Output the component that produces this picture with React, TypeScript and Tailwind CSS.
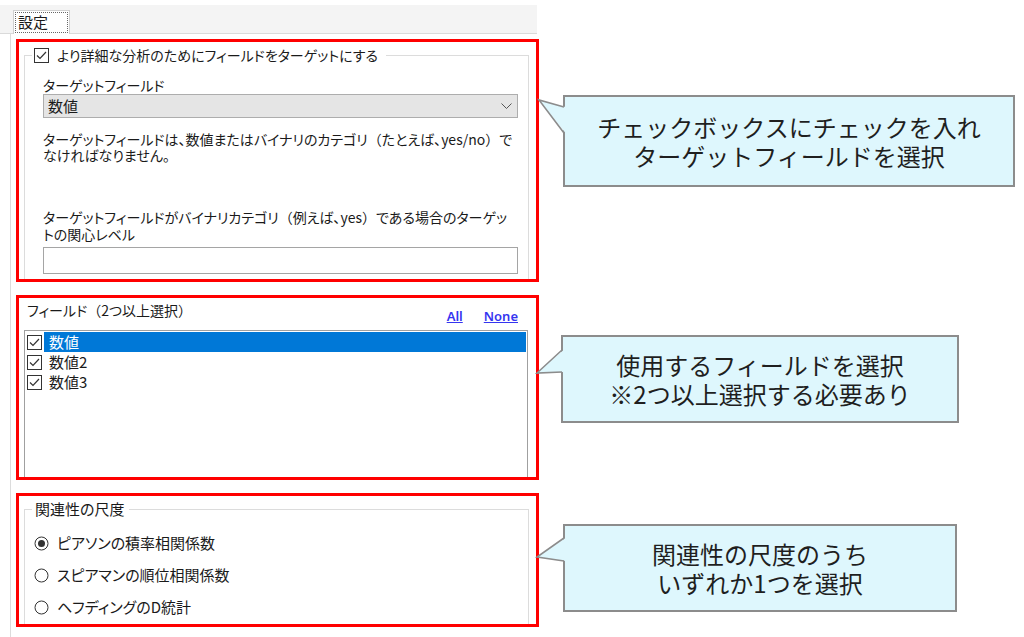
import React from 'react';

const CheckBox = ({ checked = true }: { checked?: boolean }) => (
  <svg width="15" height="15" viewBox="0 0 15 15" className="shrink-0">
    <rect x="0.5" y="0.5" width="14" height="14" fill="#fff" stroke="#333" />
    {checked && <polyline points="3,7.5 6,10.5 12,4" fill="none" stroke="#333" strokeWidth="1.2" />}
  </svg>
);

const Radio = ({ checked = false }: { checked?: boolean }) => (
  <svg width="15" height="15" viewBox="0 0 15 15" className="shrink-0">
    <circle cx="7.5" cy="7.5" r="6.5" fill="#fff" stroke="#333" />
    {checked && <circle cx="7.5" cy="7.5" r="3.5" fill="#333" />}
  </svg>
);

// full-width bracket (keeps its em width even under palt)
const P = ({ c }: { c: string }) => <span className="[font-feature-settings:normal]">{c}</span>;

type TailProps = { tip: [number, number]; y1: number; y2: number };

const Callout = ({
  className,
  tail,
  lines,
}: {
  className: string;
  tail: TailProps;
  lines: string[];
}) => {
  const [tx, ty] = tail.tip;
  // svg origin sits 30px left of the box's outer edge
  const fill = `32.5,${tail.y1} ${30 + tx},${ty} 32.5,${tail.y2}`;
  const edge = `31,${tail.y1} ${30 + tx},${ty} 31,${tail.y2}`;
  return (
    <div
      className={`relative flex shrink-0 flex-col items-center justify-center border-2 border-[#8c8c8c] bg-[#def7fd] text-center text-[24px] leading-[29px] text-[#1f1f1f] [font-feature-settings:normal] ${className}`}
    >
      <svg className="absolute left-[-32px] top-[-2px] overflow-visible" width="34" height="60">
        <polygon points={fill} fill="#def7fd" />
        <polyline points={edge} fill="none" stroke="#8c8c8c" strokeWidth="1.6" />
      </svg>
      {lines.map((l) => (
        <div key={l} className="whitespace-nowrap">
          {l}
        </div>
      ))}
    </div>
  );
};

const fields = ['数値', '数値2', '数値3'];

const measures = ['ピアソンの積率相関係数', 'スピアマンの順位相関係数', 'ヘフディングのD統計'];

export default function App() {
  return (
    <div className="flex h-[637px] w-[1024px] overflow-hidden bg-white font-['Noto_Sans_CJK_JP','Noto_Sans',sans-serif] text-[#1a1a1a] [font-feature-settings:'palt']">
      {/* dialog */}
      <div className="flex w-[539px] shrink-0 flex-col pt-[5px]">
        <div className="flex h-[29px] w-[537px] items-end border-b border-[#dadada] bg-[#f4f4f4] pl-[13px]">
          <div className="-mb-px h-[24px] w-[57px] border border-b-0 border-[#d0d0d0] bg-white p-px">
            <div className="h-[21px] border border-dotted border-[#666] pl-[2px] text-[15px] leading-[18px]">設定</div>
          </div>
        </div>

        <div className="ml-[10px] flex flex-1 flex-col border-l border-[#dcdcdc] pl-[5px]">
          {/* target */}
          <div className="mt-[5px] flex h-[243px] w-[523px] flex-col border-[3px] border-[#ff0000] pl-[5px]">
            <fieldset className="mt-[3px] w-[505px] min-w-0 flex-1 border border-b-0 border-[#dcdcdc]">
              <legend className="ml-[7px] flex items-center gap-[8px] pl-[2px] pr-[8px] text-[14px] leading-[20px]">
                <CheckBox />
                <span>より詳細な分析のためにフィールドをターゲットにする</span>
              </legend>
              <div className="flex flex-col pl-[18px] text-[14px]">
                <div className="mt-[11px] leading-[18px]">ターゲットフィールド</div>
                <div className="flex h-[24px] w-[475px] items-center justify-between border border-[#adadad] bg-[#e5e5e5] pl-[4px] pr-[5px]">
                  <span className="text-[15px] leading-[18px]">数値</span>
                  <svg width="11" height="7" viewBox="0 0 11 7">
                    <polyline points="0.5,0.5 5.5,5.5 10.5,0.5" fill="none" stroke="#555" />
                  </svg>
                </div>
                <div className="mt-[13px] whitespace-nowrap leading-[16px]">
                  ターゲットフィールドは、数値またはバイナリのカテゴリ<P c="（" />たとえば、yes/no<P c="）" />で
                  <br />
                  なければなりません。
                </div>
                <div className="mt-[46px] whitespace-nowrap leading-[17px]">
                  ターゲットフィールドがバイナリカテゴリ<P c="（" />例えば、yes<P c="）" />である場合のターゲッ
                  <br />
                  トの関心レベル
                </div>
                <div className="mt-[4px] h-[27px] w-[475px] border border-[#a5a5a5] bg-white" />
              </div>
            </fieldset>
          </div>

          {/* fields */}
          <div className="mt-[13px] flex h-[185px] w-[523px] flex-col border-[3px] border-[#ff0000]">
            <div className="flex h-[32px] items-start justify-between pl-[8px] pr-[18px]">
              <span className="mt-[3px] text-[14px] leading-[18px]">
                フィールド<P c="（" />2つ以上選択<P c="）" />
              </span>
              <div className="mt-[10px] flex gap-[21px] font-['Noto_Sans',sans-serif] text-[13px] font-semibold leading-[16px] text-[#3535f0] underline">
                <span>All</span>
                <span>None</span>
              </div>
            </div>
            <div className="ml-[5px] w-[504px] flex-1 border border-b-0 border-[#a0a0a0] pl-[2px] pr-px pt-px">
              {fields.map((f, i) => (
                <div key={f} className="flex h-[20px] items-center gap-[2px]">
                  <CheckBox />
                  <div
                    className={
                      i === 0
                        ? 'flex h-[20px] flex-1 items-center bg-[#0078d7] pl-[5px] text-[15px] text-white'
                        : 'flex h-[20px] flex-1 items-center pl-[5px] text-[15px]'
                    }
                  >
                    {f}
                  </div>
                </div>
              ))}
            </div>
          </div>

          {/* measure */}
          <div className="mt-[13px] flex h-[134px] w-[523px] flex-col border-[3px] border-[#ff0000] pl-[5px]">
            <fieldset className="mt-[3px] w-[505px] min-w-0 flex-1 border border-b-0 border-[#dcdcdc]">
              <legend className="ml-[7px] pl-[3px] pr-[5px] text-[15px] leading-[20px]">関連性の尺度</legend>
              <div className="flex flex-col pl-[9px] pt-[8px]">
                {measures.map((m, i) => (
                  <div key={m} className="flex h-[32px] items-center gap-[8px] text-[15px]">
                    <Radio checked={i === 0} />
                    <span>{m}</span>
                  </div>
                ))}
              </div>
            </fieldset>
          </div>
        </div>
      </div>

      {/* notes */}
      <div className="flex flex-1 flex-col">
        <Callout
          className="ml-[24px] mt-[95px] h-[92px] w-[452px]"
          tail={{ tip: [-24, 5], y1: 12, y2: 38 }}
          lines={['チェックボックスにチェックを入れ', 'ターゲットフィールドを選択']}
        />
        <Callout
          className="ml-[22px] mt-[148px] h-[88px] w-[398px]"
          tail={{ tip: [-24, 38], y1: 15, y2: 37 }}
          lines={['使用するフィールドを選択', '※2つ以上選択する必要あり']}
        />
        <Callout
          className="ml-[24px] mt-[101px] h-[88px] w-[394px]"
          tail={{ tip: [-26, 33], y1: 14, y2: 37 }}
          lines={['関連性の尺度のうち', 'いずれか1つを選択']}
        />
      </div>
    </div>
  );
}
